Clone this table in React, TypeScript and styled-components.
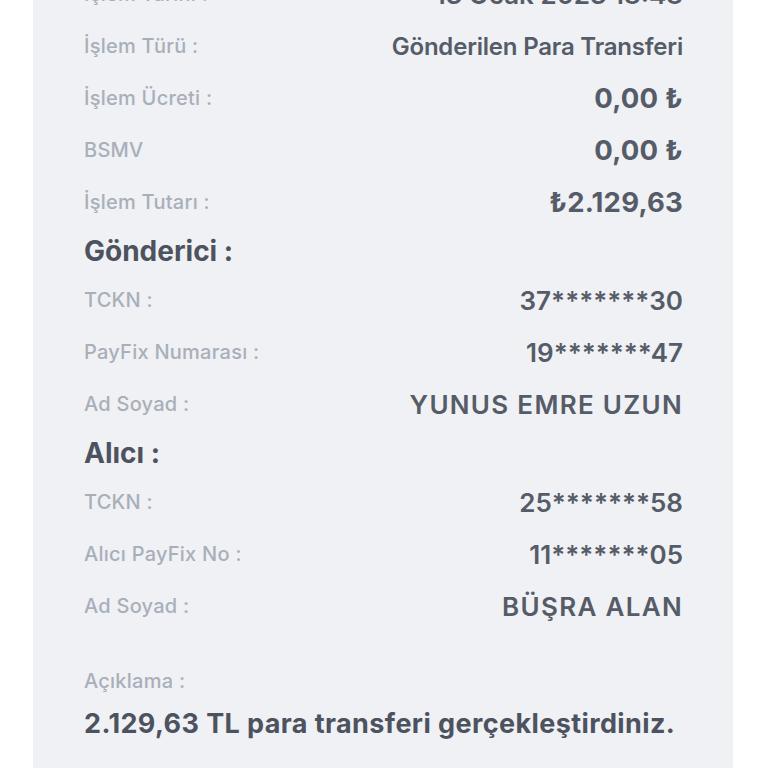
import React from "react";
import styled, { createGlobalStyle } from "styled-components";

const Global = createGlobalStyle`
  html, body { margin: 0; padding: 0; background: #ffffff; }
  body { font-family: Inter, "Noto Sans", sans-serif; }
`;

const Page = styled.div`
  width: 768px;
  height: 768px;
  overflow: hidden;
  background: #ffffff;
  display: flex;
  justify-content: center;
`;

const Card = styled.div`
  width: 700px;
  margin-left: -2px;
  background: #eff1f5;
  padding: 0 50px 0 51px;
  box-sizing: border-box;
`;

const List = styled.div`
  margin-top: -32px;
  display: flex;
  flex-direction: column;
`;

const Row = styled.div`
  height: 52px;
  display: flex;
  align-items: center;
  justify-content: space-between;
`;

const Label = styled.span`
  font-size: 20px;
  line-height: 24px;
  font-weight: 500;
  letter-spacing: 0.25px;
  color: #a9afb9;
`;

type Kind = "text" | "amount" | "code" | "name";

const sizes: Record<Kind, { size: number; spacing: number; weight: number }> = {
  text: { size: 24, spacing: -0.2, weight: 600 },
  amount: { size: 27.5, spacing: 0.2, weight: 700 },
  code: { size: 26, spacing: 0, weight: 600 },
  name: { size: 26, spacing: 1.3, weight: 600 },
};

const Value = styled.span<{ $kind: Kind }>`
  font-size: ${(p) => sizes[p.$kind].size}px;
  font-weight: ${(p) => sizes[p.$kind].weight};
  letter-spacing: ${(p) => sizes[p.$kind].spacing}px;
  color: #565c67;
`;

const Heading = styled.div`
  height: 46px;
  display: flex;
  align-items: center;
  font-size: 28px;
  font-weight: 700;
  color: #4d535e;
`;

const Note = styled.div`
  margin-top: 37px;
  display: flex;
  flex-direction: column;
  gap: 14px;
`;

const NoteText = styled.div`
  font-size: 27px;
  line-height: 33px;
  font-weight: 700;
  letter-spacing: 0.4px;
  color: #4d535e;
`;

type R = { label: string; value: string; kind: Kind };

const top: R[] = [
  { label: "İşlem Tarihi :", value: "13 Ocak 2023 18:48", kind: "code" },
  { label: "İşlem Türü :", value: "Gönderilen Para Transferi", kind: "text" },
  { label: "İşlem Ücreti :", value: "0,00 ₺", kind: "amount" },
  { label: "BSMV", value: "0,00 ₺", kind: "amount" },
  { label: "İşlem Tutarı :", value: "₺2.129,63", kind: "amount" },
];

const sender: R[] = [
  { label: "TCKN :", value: "37*******30", kind: "code" },
  { label: "PayFix Numarası :", value: "19*******47", kind: "code" },
  { label: "Ad Soyad :", value: "YUNUS EMRE UZUN", kind: "name" },
];

const receiver: R[] = [
  { label: "TCKN :", value: "25*******58", kind: "code" },
  { label: "Alıcı PayFix No :", value: "11*******05", kind: "code" },
  { label: "Ad Soyad :", value: "BÜŞRA ALAN", kind: "name" },
];

const Rows = ({ items }: { items: R[] }) => (
  <>
    {items.map((r, i) => (
      <Row key={i}>
        <Label>{r.label}</Label>
        <Value $kind={r.kind}>{r.value}</Value>
      </Row>
    ))}
  </>
);

export default function App() {
  return (
    <>
      <Global />
      <Page>
        <Card>
          <List>
            <Rows items={top} />
            <Heading>Gönderici :</Heading>
            <Rows items={sender} />
            <Heading>Alıcı :</Heading>
            <Rows items={receiver} />
            <Note>
              <Label>Açıklama :</Label>
              <NoteText>2.129,63 TL para transferi gerçekleştirdiniz.</NoteText>
            </Note>
          </List>
        </Card>
      </Page>
    </>
  );
}
